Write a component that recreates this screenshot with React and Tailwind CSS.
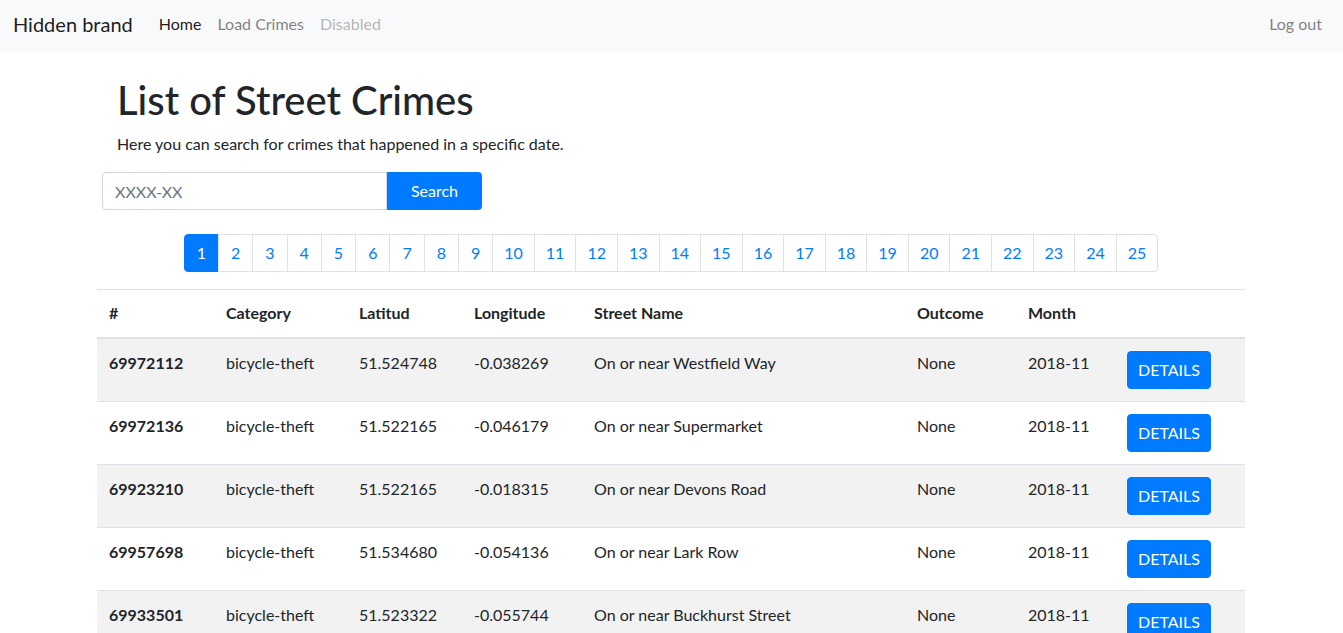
import React from 'react';

const crimes = [
  { id: '69972112', category: 'bicycle-theft', lat: '51.524748', lng: '-0.038269', street: 'On or near Westfield Way', outcome: 'None', month: '2018-11' },
  { id: '69972136', category: 'bicycle-theft', lat: '51.522165', lng: '-0.046179', street: 'On or near Supermarket', outcome: 'None', month: '2018-11' },
  { id: '69923210', category: 'bicycle-theft', lat: '51.522165', lng: '-0.018315', street: 'On or near Devons Road', outcome: 'None', month: '2018-11' },
  { id: '69957698', category: 'bicycle-theft', lat: '51.534680', lng: '-0.054136', street: 'On or near Lark Row', outcome: 'None', month: '2018-11' },
  { id: '69933501', category: 'bicycle-theft', lat: '51.523322', lng: '-0.055744', street: 'On or near Buckhurst Street', outcome: 'None', month: '2018-11' },
];

const pages = Array.from({ length: 25 }, (_, i) => i + 1);

function NavBar() {
  return (
    <nav className="flex h-[52px] items-center bg-[#f8f9fa] px-[13px] pb-1">
      <span className="mr-[18px] text-[20px] leading-[30px] text-black/90">Hidden brand</span>
      <div className="flex items-center">
        <a href="#" className="px-2 py-2 text-black/90">Home</a>
        <a href="#" className="px-2 py-2 text-black/50">Load Crimes</a>
        <span className="px-2 py-2 text-black/30">Disabled</span>
      </div>
      <a href="#" className="ml-auto px-2 py-2 text-black/50">Log out</a>
    </nav>
  );
}

function Pagination() {
  return (
    <ul className="flex justify-center">
      {pages.map((p) => {
        const pad = p > 9 ? 'px-[11px]' : 'px-3';
        let cls = `-ml-px block border border-[#dee2e6] ${pad} py-[6px] leading-6 text-[#007bff]`;
        if (p === 1) cls = 'block rounded-l-[4px] border border-[#007bff] bg-[#007bff] px-3 py-[6px] leading-6 text-white';
        if (p === 25) cls += ' rounded-r-[4px]';
        return (
          <li key={p}>
            <a href="#" className={cls}>{p}</a>
          </li>
        );
      })}
    </ul>
  );
}

function CrimeTable() {
  const th = 'border-b-2 border-[#dee2e6] px-3 pt-[11px] pb-3 font-bold';
  const td = 'border-t border-[#dee2e6] p-3 align-top';
  return (
    <table className="w-full border-collapse text-left">
      <thead>
        <tr className="border-t border-[#dee2e6]">
          <th className={`w-[117px] ${th}`}>#</th>
          <th className={`w-[133px] ${th}`}>Category</th>
          <th className={`w-[115px] ${th}`}>Latitud</th>
          <th className={`w-[120px] ${th}`}>Longitude</th>
          <th className={`w-[323px] ${th}`}>Street Name</th>
          <th className={`w-[111px] ${th}`}>Outcome</th>
          <th className={`w-[99px] ${th}`}>Month</th>
          <th className={th}></th>
        </tr>
      </thead>
      <tbody>
        {crimes.map((c, i) => (
          <tr key={c.id} className={i % 2 === 0 ? 'bg-[#f2f2f2]' : 'bg-white'}>
            <td className={`${td} font-bold`}>{c.id}</td>
            <td className={td}>{c.category}</td>
            <td className={td}>{c.lat}</td>
            <td className={td}>{c.lng}</td>
            <td className={td}>{c.street}</td>
            <td className={td}>{c.outcome}</td>
            <td className={td}>{c.month}</td>
            <td className={td}>
              <button className="rounded-[4px] border border-[#007bff] bg-[#007bff] px-[10px] py-[6px] leading-6 text-white">DETAILS</button>
            </td>
          </tr>
        ))}
      </tbody>
    </table>
  );
}

export default function App() {
  return (
    <div className="min-h-screen bg-white text-[16px] leading-6 text-[#212529] [font-family:Lato,'Noto_Sans',sans-serif]">
      <NavBar />
      <main className="mt-6 ml-[97px] w-[1148px]">
        <div className="px-5">
          <h1 className="mb-2 text-[40px] leading-[48px] font-medium">List of Street Crimes</h1>
          <p className="mb-4">Here you can search for crimes that happened in a specific date.</p>
        </div>
        <div className="ml-[5px] flex">
          <input
            type="text"
            placeholder="XXXX-XX"
            className="h-[38px] w-[285px] rounded-l-[4px] border border-[#ced4da] px-3 text-[#495057] placeholder:text-[#6c757d] focus:outline-none"
          />
          <button className="h-[38px] w-[95px] rounded-r-[4px] bg-[#007bff] text-white">Search</button>
        </div>
        <div className="mt-6 mb-[17px]">
          <Pagination />
        </div>
        <CrimeTable />
      </main>
    </div>
  );
}
